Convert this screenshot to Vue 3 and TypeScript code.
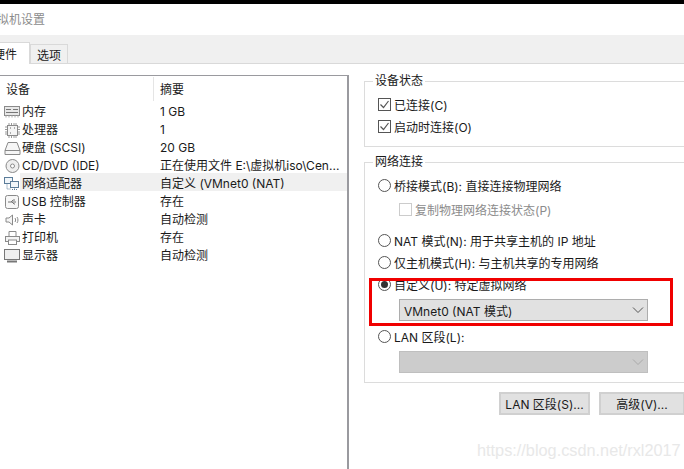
<script setup lang="ts">
interface Row { name: string; summary: string; icon: string; selected?: boolean }
const rows: Row[] = [
  { name: '内存', summary: '1 GB', icon: 'mem' },
  { name: '处理器', summary: '1', icon: 'cpu' },
  { name: '硬盘 (SCSI)', summary: '20 GB', icon: 'disk' },
  { name: 'CD/DVD (IDE)', summary: '正在使用文件 E:\\虚拟机iso\\Cen...', icon: 'cd' },
  { name: '网络适配器', summary: '自定义 (VMnet0 (NAT)', icon: 'net', selected: true },
  { name: 'USB 控制器', summary: '存在', icon: 'usb' },
  { name: '声卡', summary: '自动检测', icon: 'sound' },
  { name: '打印机', summary: '存在', icon: 'printer' },
  { name: '显示器', summary: '自动检测', icon: 'monitor' },
]
</script>

<template>
  <div class="page">
    <div class="topbar"></div>
    <div class="title"><span>虚拟机设置</span></div>
    <div class="tabs">
      <div class="tab active"><span>硬件</span></div>
      <div class="tab">选项</div>
    </div>
    <div class="body">
      <section class="list">
        <div class="head">
          <div class="c1">设备</div>
          <div class="c2">摘要</div>
        </div>
        <div v-for="r in rows" :key="r.name" class="row" :class="{ sel: r.selected }">
          <div class="c1 name">
            <svg class="ic" width="18" height="18" viewBox="0 0 18 18" fill="none" stroke="#8a8a8a" stroke-width="1">
              <template v-if="r.icon === 'mem'">
                <rect x="1.5" y="3.5" width="15" height="9" fill="#e8e8e8" />
                <path d="M3 6.5h5M10 6.5h5M3 9.5h12" stroke="#777" />
                <path d="M3 12.5v2M6 12.5v2M9 12.5v2M12 12.5v2M15 12.5v2" stroke="#aaa" />
              </template>
              <template v-else-if="r.icon === 'cpu'">
                <rect x="4.5" y="4.5" width="10" height="10" fill="#f4f4f4" />
                <path d="M6 2v2M8.5 2v2M11 2v2M13 2v2M6 15v2M8.5 15v2M11 15v2M13 15v2M2 6h2M2 8.5h2M2 11h2M2 13h2M15 6h2M15 8.5h2M15 11h2M15 13h2" stroke="#999" />
                <path d="M7 7h1M11 7h1M7 12h1" stroke="#666" />
              </template>
              <template v-else-if="r.icon === 'disk'">
                <path d="M5 3.5h9l3 8v4H2v-4z" fill="#f6f6f6" />
                <path d="M2 11.5h15" />
              </template>
              <template v-else-if="r.icon === 'cd'">
                <circle cx="9.5" cy="9" r="6.5" fill="#eee" />
                <circle cx="9.5" cy="9" r="2" fill="#fff" />
              </template>
              <template v-else-if="r.icon === 'net'">
                <rect x="1.5" y="2.5" width="8" height="6" stroke="#5b7c99" fill="#f1f6fa" />
                <rect x="7.5" y="6.5" width="8" height="6" stroke="#5b7c99" fill="#f1f6fa" />
                <path d="M11.5 12.5v2M9 14.5h5M4 8.5v5.500h4" stroke="#5b7c99" stroke-dasharray="1 1" />
              </template>
              <template v-else-if="r.icon === 'usb'">
                <rect x="2.500" y="2.500" width="13" height="13" rx="2" fill="#f7f7f7" />
                <path d="M5 9h8M8 9l2-2h2M9 9l2 2h1" stroke="#777" />
              </template>
              <template v-else-if="r.icon === 'sound'">
                <path d="M3 7h3l3.500-3v10l-3.500-3H3z" fill="#f5f5f5" />
                <path d="M12 7c.8 1.300.8 2.700 0 4M14 6c1.300 2 1.300 4 0 6" />
              </template>
              <template v-else-if="r.icon === 'printer'">
                <path d="M6 7V2.500h7V7" />
                <rect x="2.500" y="7.500" width="14" height="5" fill="#f4f4f4" />
                <rect x="5.500" y="11" width="8" height="4.500" fill="#fff" />
              </template>
              <template v-else>
                <rect x="1.500" y="2.500" width="15" height="10" fill="#efefef" stroke="#777" />
                <path d="M4 14.500h10" stroke="#777" stroke-width="2" />
              </template>
            </svg>
            <span>{{ r.name }}</span>
          </div>
          <div class="c2 sum">{{ r.summary }}</div>
        </div>
      </section>

      <section class="side">
        <fieldset class="group g1">
          <legend>设备状态</legend>
          <label class="opt">
            <span class="check">
              <svg width="11" height="11" viewBox="0 0 11 11" fill="none" stroke="#555" stroke-width="1.200"><path d="M1.500 5.500l3 3 5-6.500" /></svg>
            </span>已连接(C)
          </label>
          <label class="opt">
            <span class="check">
              <svg width="11" height="11" viewBox="0 0 11 11" fill="none" stroke="#555" stroke-width="1.200"><path d="M1.500 5.500l3 3 5-6.500" /></svg>
            </span>启动时连接(O)
          </label>
        </fieldset>

        <fieldset class="group g2">
          <legend>网络连接</legend>
          <label class="opt"><span class="radio"></span>桥接模式(B): 直接连接物理网络</label>
          <label class="opt sub disabled"><span class="check off"></span>复制物理网络连接状态(P)</label>
          <label class="opt nat"><span class="radio"></span>NAT 模式(N): 用于共享主机的 IP 地址</label>
          <label class="opt"><span class="radio"></span>仅主机模式(H): 与主机共享的专用网络</label>
          <label class="opt"><span class="radio on"></span>自定义(U): 特定虚拟网络</label>
          <div class="select">
            <span>VMnet0 (NAT 模式)</span>
            <svg width="12" height="8" viewBox="0 0 12 8" fill="none" stroke="#555"><path d="M1 1.500l5 5 5-5" /></svg>
          </div>
          <label class="opt lan"><span class="radio"></span>LAN 区段(L):</label>
          <div class="select off">
            <svg width="12" height="8" viewBox="0 0 12 8" fill="none" stroke="#aaa"><path d="M1 1.500l5 5 5-5" /></svg>
          </div>
        </fieldset>

        <div class="buttons">
          <button class="btn b1">LAN 区段(S)...</button>
          <button class="btn b2">高级(V)...</button>
        </div>
      </section>
    </div>
    <div class="redbox"></div>
    <div class="watermark">https://blog.csdn.net/rxl2017</div>
  </div>
</template>

<style scoped>
.page {
  position: relative;
  width: 684px;
  height: 469px;
  overflow: hidden;
  background: #fff;
  font-family: "Inter", "Noto Sans CJK SC", sans-serif;
  font-size: 12px;
  color: #1a1a1a;
}
.topbar { height: 4px; background: #000; }
.title {
  height: 31px;
  line-height: 31px;
  color: #8c8c8c;
  overflow: hidden;
  white-space: nowrap;
}
.title span { display: block; margin-left: -15px; }
.tabs {
  height: 29px;
  box-sizing: border-box;
  background: #f0f0f0;
  border-bottom: 1px solid #d9d9d9;
  display: flex;
  align-items: flex-end;
  padding-top: 7px;
}
.tab {
  box-sizing: border-box;
  width: 38px;
  height: 20px;
  line-height: 21px;
  margin-bottom: -1px;
  text-align: center;
  background: #f0f0f0;
  border: 1px solid #d9d9d9;
}
.tab.active {
  width: 30px;
  height: 22px;
  background: #fff;
  border-bottom: 0;
  border-left: 0;
  overflow: hidden;
  line-height: 24px;
}
.tab.active span { display: block; margin-left: -7px; width: 40px; text-align: left; }
.body {
  display: flex;
  padding-top: 11px;
}
.list {
  box-sizing: border-box;
  width: 349px;
  height: 394px;
  border-top: 1px solid #9a9a9f;
  border-right: 2px solid #9a9a9f;
}
.head { display: flex; height: 25px; align-items: flex-start; padding-top: 1px; box-sizing: border-box; }
.head .c1 { padding-left: 6px; border-right: 1px solid #e5e5e5; height: 24px; line-height: 26px; }
.head .c2 { line-height: 26px; height: 24px; }
.c1 { box-sizing: border-box; width: 154px; flex: none; }
.c2 { flex: 1; padding-left: 6px; }
.row { display: flex; height: 18px; box-sizing: border-box; padding-top: 3px; line-height: 18px; align-items: center; }
.name { display: flex; align-items: center; padding-left: 3px; white-space: nowrap; }
.ic { flex: none; margin-right: 1px; }
.sum { white-space: nowrap; }
.row.sel { background: linear-gradient(to right, #fff 20px, #f0f0f0 20px); }
.side { flex: 1; padding-left: 15px; margin-top: -2px; min-width: 0; }
.group {
  box-sizing: border-box;
  margin: 0;
  padding: 0;
  border: 1px solid #dcdcdc;
  border-right: 0;
  min-width: 0;
}
.group legend {
  margin-left: -5px;
  padding: 0 2px;
  line-height: 16px;
}
.g1 { height: 74px; padding: 4px 0 0 13px; }
.g2 { height: 229px; margin-top: 7px; padding: 4px 0 0 13px; }
.opt { display: flex; align-items: center; height: 22px; white-space: nowrap; }
.check {
  box-sizing: border-box;
  width: 13px; height: 13px;
  border: 1px solid #555;
  background: #fff;
  margin-right: 3px;
  display: flex;
  align-items: center;
  justify-content: center;
}
.check.off { border-color: #ccc; }
.radio {
  box-sizing: border-box;
  width: 13px; height: 13px;
  border: 1px solid #555;
  border-radius: 50%;
  margin-right: 3px;
  position: relative;
  flex: none;
}
.radio.on::after {
  content: "";
  position: absolute;
  inset: 2px;
  background: #333;
  border-radius: 50%;
}
.sub { margin: 2px 0 0 21px; }
.disabled { color: #8c8c8c; }
.nat { margin-top: 9px; }
.select {
  box-sizing: border-box;
  width: 249px;
  height: 22px;
  margin: 4px 0 0 21px;
  background: #e1e1e1;
  border: 1px solid #adadad;
  display: flex;
  align-items: center;
  justify-content: space-between;
  padding: 0 3px 0 4px;
}
.select.off { background: #cccccc; border-color: #bfbfbf; justify-content: flex-end; margin-top: 4px; }
.lan { margin-top: 4px; }
.buttons { display: flex; gap: 9px; padding: 9px 0 0 135px; }
.btn {
  box-sizing: border-box;
  height: 23px;
  padding: 0;
  font: inherit;
  color: inherit;
  background: #e1e1e1;
  border: 2px solid #d0d0d0;
}
.b1 { width: 91px; flex: none; }
.b2 { width: 86px; flex: none; }
.redbox {
  position: absolute;
  left: 369px;
  top: 278px;
  width: 304px;
  height: 48px;
  box-sizing: border-box;
  border: 3px solid #f00000;
  pointer-events: none;
}
.watermark {
  position: absolute;
  left: 477px;
  top: 441px;
  font-family: "Liberation Sans", sans-serif;
  font-size: 16.3px;
  color: #e8e8e8;
  white-space: nowrap;
}
</style>
